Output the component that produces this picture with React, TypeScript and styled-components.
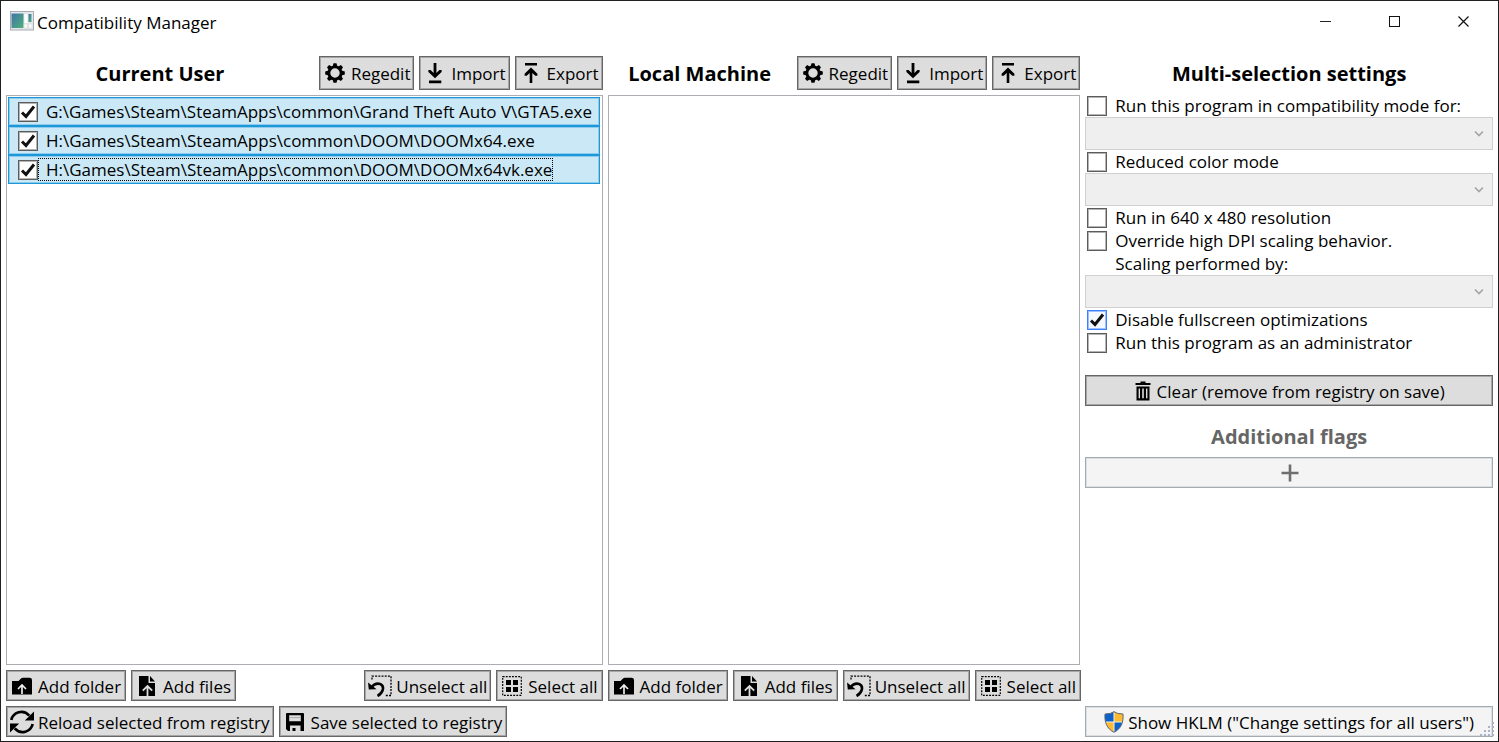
import React, { useState } from "react";
import styled, { createGlobalStyle, css } from "styled-components";

const GlobalStyle = createGlobalStyle`
  *, *::before, *::after { box-sizing: border-box; }
  body {
    margin: 0;
    background: #fff;
    color: #000;
    font-family: "Open Sans", "Noto Sans", sans-serif;
    font-size: 17px;
    line-height: 23px;
  }
`;

const Window = styled.main`
  position: relative;
  display: flex;
  flex-direction: column;
  min-height: 100vh;
  border: 1px solid #231f20;
  background: #fff;
`;

const TitleBar = styled.header`
  display: flex;
  align-items: center;
  height: 40px;
  padding-left: 9px;
`;

const Title = styled.h1`
  flex: 1;
  margin: 0;
  padding: 2px 0 0 2px;
  font-size: 17px;
  line-height: 23px;
  font-weight: 400;
`;

const CaptionButton = styled.button`
  display: grid;
  place-items: center;
  width: 69px;
  height: 40px;
  padding: 0;
  border: 0;
  background: transparent;
`;

const Content = styled.div`
  flex: 1;
  display: grid;
  grid-template-columns: minmax(0, 597fr) minmax(0, 473fr) minmax(0, 408fr);
  grid-template-rows: 1fr auto;
  gap: 5px;
  padding: 15px 5px 4px;
`;

const Panel = styled.section`
  display: flex;
  flex-direction: column;
  gap: 5px;
`;

const PanelHeader = styled.div`
  display: flex;
  align-items: center;
  gap: 5px;
`;

const Heading = styled.h2<{ $muted?: boolean }>`
  flex: 1;
  margin: 0;
  padding-top: 2px;
  font-size: 20px;
  line-height: 32px;
  font-weight: 700;
  text-align: center;
  white-space: nowrap;
  color: ${(p) => (p.$muted ? "#666" : "#000")};
`;

const ButtonRow = styled.div`
  display: flex;
  gap: 5px;
`;

const ButtonGroup = styled(ButtonRow)`
  &:last-child:not(:first-child) { margin-left: auto; }
`;

const Button = styled.button<{ $tall?: boolean; $tight?: boolean; $soft?: boolean }>`
  display: flex;
  align-items: center;
  justify-content: center;
  gap: 6px;
  height: ${(p) => (p.$tall ? 34 : 31)}px;
  padding: 0 ${(p) => (p.$tall ? 3 : 4)}px 0 5px;
  border: 1px solid #666;
  box-shadow: inset 0 0 0 1px #a6a6a6;
  background: #ddd;
  color: #000;
  font: inherit;
  white-space: nowrap;
  ${(p) => p.$tight && css`gap: 4px; padding: 0 3px;`}
  ${(p) =>
    p.$soft &&
    css`
      border-color: #a3aab0;
      box-shadow: inset 0 0 0 1px #dcdfe2;
      background: #f4f4f4;
    `}
`;

const Caption = styled.span`
  padding-top: 1px;
`;

const FileList = styled.ul`
  flex: 1;
  margin: 0;
  padding: 1px 2px 1px 1px;
  border: 1px solid #abadb3;
  list-style: none;
`;

const FileRow = styled.li`
  display: flex;
  align-items: center;
  height: 29px;
  padding-left: 9px;
  border: 1px solid #1c97d8;
  box-shadow: inset 0 0 0 1px #8fcbec;
  background: #cbe8f6;
`;

const FileLabel = styled.label<{ $focused?: boolean }>`
  padding: 0 0 0 7px;
  line-height: 21px;
  border: 1px dotted ${(p) => (p.$focused ? "#000" : "transparent")};
  white-space: nowrap;
`;

const CheckCell = styled.span`
  display: grid;
  place-items: center;
  flex: none;

  > * { grid-area: 1 / 1; }
  > svg { pointer-events: none; }
`;

const CheckInput = styled.input<{ $hot?: boolean }>`
  appearance: none;
  width: 20px;
  height: 20px;
  margin: 0;
  border: 1px solid ${(p) => (p.$hot ? "#3c7fff" : "#5c5c5c")};
  box-shadow: inset 0 0 0 1px ${(p) => (p.$hot ? "#9cc0fb" : "#b4b4b4")};
  background: ${(p) => (p.$hot ? "#f3f9ff" : "#fff")};
`;

const Options = styled.div`
  display: flex;
  flex-direction: column;
  margin-top: -1px;
`;

const Option = styled.div`
  display: flex;
  align-items: center;
  gap: 8px;
  height: 23px;
  padding-left: 2px;
`;

const OptionNote = styled.label`
  height: 23px;
  padding-left: 30px;
`;

const SelectCell = styled.span`
  display: grid;
  align-items: center;

  > * { grid-area: 1 / 1; }
  > svg { justify-self: end; margin-right: 9px; pointer-events: none; }
`;

const SelectInput = styled.select`
  appearance: none;
  width: 100%;
  height: 33px;
  border: 1px solid #d0d0d0;
  border-radius: 0;
  background: #efefef;
  opacity: 1;
`;

const Actions = styled.div`
  display: flex;
  flex-direction: column;
  margin-top: 16px;
`;

const FlagsHeading = styled(Heading)`
  flex: none;
  padding: 15px 0 4px;
`;

const Footer = styled(ButtonRow)`
  grid-column: 1 / 3;
`;

const Grip = styled.svg`
  position: absolute;
  right: 2px;
  bottom: 3px;
`;

const Check = () => (
  <svg width="16" height="16" viewBox="0 0 16 16" fill="none" stroke="#111" strokeWidth="3">
    <path d="M2 8.5 L6 12.5 L14 2.5" />
  </svg>
);

const Chevron = () => (
  <svg width="10" height="8" viewBox="0 0 10 8" fill="none" stroke="#a5a5a5" strokeWidth="1.7">
    <path d="M1 1.5 L5 5.5 L9 1.5" />
  </svg>
);

const AppIcon = () => (
  <svg width="25" height="20" viewBox="0 0 25 20">
    <defs>
      <linearGradient id="pane" x1="0" y1="0" x2="1" y2="1">
        <stop offset="0" stopColor="#3f74a8" />
        <stop offset="1" stopColor="#4fb07a" />
      </linearGradient>
    </defs>
    <rect x="0.5" y="0.5" width="23" height="18.5" fill="#e4e7ea" stroke="#a9adb3" />
    <rect x="1.5" y="2.5" width="12" height="14.5" fill="url(#pane)" />
    <rect x="14.5" y="3" width="3" height="9" fill="#fff" />
    <rect x="18.5" y="3" width="3" height="8" fill="url(#pane)" />
    <rect x="14" y="13" width="3.5" height="4" fill="#fafafa" stroke="#d5d7da" strokeWidth="0.5" />
    <rect x="18.5" y="13" width="3.5" height="4" fill="#fafafa" stroke="#d5d7da" strokeWidth="0.5" />
  </svg>
);

const GearIcon = () => (
  <svg width="20" height="20" viewBox="-10 -10 20 20">
    {[0, 45, 90, 135, 180, 225, 270, 315].map((angle) => (
      <path key={angle} d="M-2.4 -6.5 L-1.5 -9.8 H1.5 L2.4 -6.5 Z" transform={`rotate(${angle})`} />
    ))}
    <circle r="6.1" fill="none" stroke="#000" strokeWidth="2.8" />
  </svg>
);

const ImportIcon = () => (
  <svg width="20" height="22" viewBox="0 0 20 22">
    <path d="M8.6 1 H11.4 V11 L14.4 8 H16.6 V10 L10 16.2 L3.4 10 V8 H5.6 L8.6 11 Z M4 18.6 H16.3 V21.2 H4 Z" />
  </svg>
);

const ExportIcon = () => (
  <svg width="20" height="22" viewBox="0 0 20 22">
    <path d="M4 1 H16 V3.4 H4 Z M8.7 21 V11 L5.7 13.8 H3.6 V11.8 L10 5.4 L16.4 11.8 V13.8 H14.3 L11.3 11 V21 Z" />
  </svg>
);

const FolderIcon = () => (
  <svg width="20" height="18" viewBox="0 0 20 18">
    <path d="M0 4 H6.5 L9 1.5 Q9.8 0.7 11 0.7 H17.5 Q20 0.7 20 3 V17.6 H0 Z" />
    <path d="M10 17 V9 M6 12 L10 8 L14 12" fill="none" stroke="#eee" strokeWidth="1.7" />
  </svg>
);

const FileIcon = () => (
  <svg width="20" height="20" viewBox="0 0 20 20">
    <path d="M2 0 H11.5 V7 H18 V20 H2 Z M13 0 L18 5.5 H13 Z" />
    <path d="M10.5 20 V11 M5.8 14.6 L10.5 10 L15.2 14.6" fill="none" stroke="#ddd" strokeWidth="1.8" />
  </svg>
);

const UnselectIcon = () => (
  <svg width="24" height="22" viewBox="0 0 24 22" fill="none" stroke="#000">
    <path d="M4 4.5 V1.2 H23 V20.5 H17" strokeWidth="1.3" strokeDasharray="2 1.2" />
    <path d="M0 7.5 L0.8 14.6 L8.6 14.2 Z" fill="#000" stroke="none" />
    <path d="M3 12.4 Q8 7 12.5 9.2 C17 11.6 15 18 9.5 21" strokeWidth="2.6" />
  </svg>
);

const SelectIcon = () => (
  <svg width="20" height="20" viewBox="0 0 20 20">
    <rect x="0.7" y="0.7" width="18.6" height="18.6" fill="none" stroke="#000" strokeWidth="1.2" strokeDasharray="1.9 1.2" />
    <path d="M4 4 H9 V9 H4 Z M11 4 H16 V9 H11 Z M4 11 H9 V16 H4 Z M11 11 H16 V16 H11 Z" />
  </svg>
);

const ReloadIcon = () => (
  <svg width="24" height="24" viewBox="0 0 24 24">
    <path d="M1.3 10 C3 2.5 13 -1.5 19.3 5.6 M22.7 14 C21 21.5 11 25.5 4.7 18.4" fill="none" stroke="#000" strokeWidth="2.7" />
    <path d="M24 1.5 V10.5 H14.8 Z M0 22.5 V13.5 H9.2 Z" />
  </svg>
);

const SaveIcon = () => (
  <svg width="20" height="20" viewBox="0 0 20 20">
    <path
      fillRule="evenodd"
      d="M1 2 Q1 1 2 1 H18 Q19 1 19 2 V19 H15.5 V13.5 H5 V19 H3 L1 17 Z M4.2 3.2 V9.2 H15.8 V3.2 Z"
    />
    <path d="M4.2 5.6 H15.8" stroke="#aaa" strokeWidth="1" />
    <path d="M7.5 16 H10.5 V19 H7.5 Z" />
  </svg>
);

const TrashIcon = () => (
  <svg width="16" height="20" viewBox="0 0 16 20">
    <path
      fillRule="evenodd"
      d="M5.5 0.5 H10.5 V2 H15.5 V4 H0.5 V2 H5.5 Z M1.5 5.5 H14.5 V19.5 H1.5 Z M3.6 7.5 V17.3 H5 V7.5 Z M7.2 7.5 V17.3 H8.8 V7.5 Z M11 7.5 V17.3 H12.4 V7.5 Z"
    />
  </svg>
);

const PlusIcon = () => (
  <svg width="18" height="18" viewBox="0 0 18 18">
    <path d="M9 0.5 V17.5 M0.5 9 H17.5" stroke="#6e6e6e" strokeWidth="2.6" />
  </svg>
);

const ShieldIcon = () => (
  <svg width="20" height="22" viewBox="0 0 20 22">
    <defs>
      <clipPath id="shield">
        <path d="M10 0.5 Q13 3 19 3 C19.6 11 17.5 17.5 10 21.3 C2.5 17.5 0.4 11 1 3 Q7 3 10 0.5 Z" />
      </clipPath>
    </defs>
    <g clipPath="url(#shield)">
      <path d="M0 0 H10 V11 H0 Z M10 11 H20 V22 H10 Z" fill="#0d62c9" />
      <path d="M10 0 H20 V11 H10 Z M0 11 H10 V22 H0 Z" fill="#fdb930" />
      <path d="M10 0 V22 M0 11 H20" stroke="#f4f0e0" strokeWidth="1" />
    </g>
    <path
      d="M10 0.7 Q13 3 19 3 C19.6 11 17.5 17.5 10 21.3 C2.5 17.5 0.4 11 1 3 Q7 3 10 0.7 Z"
      fill="none"
      stroke="#5d6675"
      strokeWidth="1"
    />
  </svg>
);

type CheckBoxProps = { id: string; initial?: boolean; hot?: boolean };

const CheckBox = ({ id, initial = false, hot }: CheckBoxProps) => {
  const [checked, setChecked] = useState(initial);
  return (
    <CheckCell>
      <CheckInput
        id={id}
        type="checkbox"
        $hot={hot}
        checked={checked}
        onChange={(e) => setChecked(e.target.checked)}
      />
      {checked && <Check />}
    </CheckCell>
  );
};

const OptionRow = ({ label, ...box }: CheckBoxProps & { label: string }) => (
  <Option>
    <CheckBox {...box} />
    <label htmlFor={box.id}>{label}</label>
  </Option>
);

const DropDown = ({ id, label }: { id?: string; label?: string }) => (
  <SelectCell>
    <SelectInput id={id} aria-label={label} disabled />
    <Chevron />
  </SelectCell>
);

const ScopePanel = ({ title, files }: { title: string; files: string[] }) => (
  <Panel>
    <PanelHeader>
      <Heading>{title}</Heading>
      <Button $tall><GearIcon /><Caption>Regedit</Caption></Button>
      <Button $tall><ImportIcon /><Caption>Import</Caption></Button>
      <Button $tall><ExportIcon /><Caption>Export</Caption></Button>
    </PanelHeader>
    <FileList>
      {files.map((file, i) => (
        <FileRow key={file}>
          <CheckBox id={`file-${i}`} initial />
          <FileLabel htmlFor={`file-${i}`} $focused={i === files.length - 1}>{file}</FileLabel>
        </FileRow>
      ))}
    </FileList>
    <ButtonRow>
      <ButtonGroup>
        <Button><FolderIcon /><Caption>Add folder</Caption></Button>
        <Button><FileIcon /><Caption>Add files</Caption></Button>
      </ButtonGroup>
      <ButtonGroup>
        <Button $tight><UnselectIcon /><Caption>Unselect all</Caption></Button>
        <Button><SelectIcon /><Caption>Select all</Caption></Button>
      </ButtonGroup>
    </ButtonRow>
  </Panel>
);

const userFiles = [
  "G:\\Games\\Steam\\SteamApps\\common\\Grand Theft Auto V\\GTA5.exe",
  "H:\\Games\\Steam\\SteamApps\\common\\DOOM\\DOOMx64.exe",
  "H:\\Games\\Steam\\SteamApps\\common\\DOOM\\DOOMx64vk.exe",
];

export default function App() {
  return (
    <>
      <GlobalStyle />
      <Window>
        <TitleBar>
          <AppIcon />
          <Title>Compatibility Manager</Title>
          <CaptionButton aria-label="Minimize">
            <svg width="11" height="11"><path d="M0 5.5 H11" stroke="#222" /></svg>
          </CaptionButton>
          <CaptionButton aria-label="Maximize">
            <svg width="11" height="11"><rect x="0.5" y="0.5" width="10" height="10" fill="none" stroke="#111" /></svg>
          </CaptionButton>
          <CaptionButton aria-label="Close">
            <svg width="11" height="11"><path d="M0.5 0.5 L10.5 10.5 M10.5 0.5 L0.5 10.5" stroke="#111" strokeWidth="1.2" /></svg>
          </CaptionButton>
        </TitleBar>
        <Content>
          <ScopePanel title="Current User" files={userFiles} />
          <ScopePanel title="Local Machine" files={[]} />
          <Panel>
            <PanelHeader>
              <Heading>Multi-selection settings</Heading>
            </PanelHeader>
            <Options>
              <OptionRow id="compat" label="Run this program in compatibility mode for:" />
              <DropDown label="Compatibility mode" />
              <OptionRow id="color" label="Reduced color mode" />
              <DropDown label="Color mode" />
              <OptionRow id="lowres" label="Run in 640 x 480 resolution" />
              <OptionRow id="dpi" label="Override high DPI scaling behavior." />
              <OptionNote htmlFor="scaling">Scaling performed by:</OptionNote>
              <DropDown id="scaling" />
              <OptionRow id="fullscreen" label="Disable fullscreen optimizations" initial hot />
              <OptionRow id="admin" label="Run this program as an administrator" />
            </Options>
            <Actions>
              <Button><TrashIcon /><Caption>Clear (remove from registry on save)</Caption></Button>
              <FlagsHeading $muted>Additional flags</FlagsHeading>
              <Button $soft aria-label="Add flag"><PlusIcon /></Button>
            </Actions>
          </Panel>
          <Footer>
            <Button $tight><ReloadIcon /><Caption>Reload selected from registry</Caption></Button>
            <Button><SaveIcon /><Caption>Save selected to registry</Caption></Button>
          </Footer>
          <Button $soft $tight>
            <ShieldIcon /><Caption>Show HKLM ("Change settings for all users")</Caption>
          </Button>
        </Content>
        <Grip width="16" height="16" viewBox="0 0 16 16" fill="#a9b2c6">
          <path d="M12 0h2v2h-2z M8 4h2v2h-2z M12 4h2v2h-2z M4 8h2v2h-2z M8 8h2v2h-2z M12 8h2v2h-2z M0 12h2v2h-2z M4 12h2v2h-2z M8 12h2v2h-2z M12 12h2v2h-2z" />
        </Grip>
      </Window>
    </>
  );
}
